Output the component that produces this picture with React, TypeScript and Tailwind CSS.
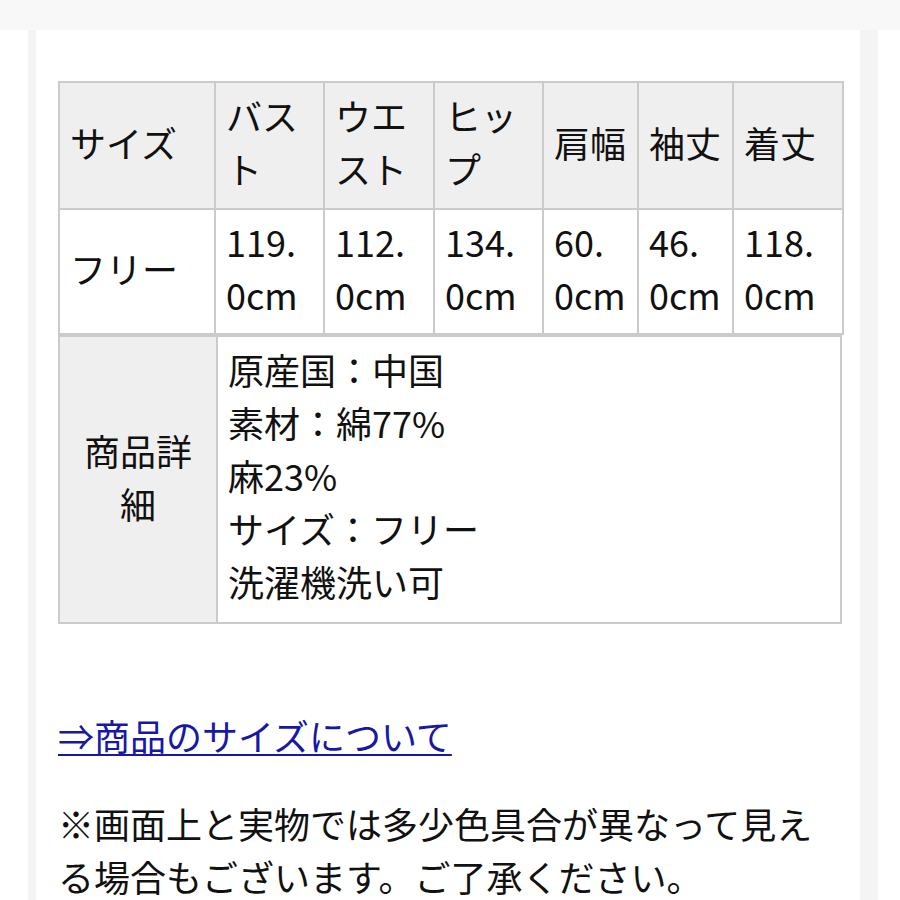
import React from "react";

const headers: React.ReactNode[] = [
  "サイズ",
  <>バス<br />ト</>,
  <>ウエ<br />スト</>,
  <>ヒッ<br />プ</>,
  "肩幅",
  "袖丈",
  "着丈",
];

const values: React.ReactNode[] = [
  "フリー",
  <>119.<br />0cm</>,
  <>112.<br />0cm</>,
  <>134.<br />0cm</>,
  <>60.<br />0cm</>,
  <>46.<br />0cm</>,
  <>118.<br />0cm</>,
];

const colWidths = ["w-[156px]", "w-[109px]", "w-[110px]", "w-[109px]", "w-[95px]", "w-[95px]", "w-[110px]"];

const details = ["原産国：中国", "素材：綿77%", "麻23%", "サイズ：フリー", "洗濯機洗い可"];

const cell = "border-2 border-[#cbcbcb] px-[10px] pt-0 pb-[7px] align-middle text-left";

export default function App() {
  return (
    <div
      className="min-h-[900px] bg-white text-[#111] text-[36px] leading-[53px]"
      style={{ fontFamily: '"Noto Sans CJK JP", "Noto Sans", sans-serif' }}
    >
      <div className="h-[30px] bg-[#f8f8f8]" />
      <div className="flex">
        <div className="w-[28px]" />
        <div className="w-[8px] bg-[#f4f4f4]" />
        <div className="w-[824px] px-[22px] pt-[51px] pb-[20px]">
          <table className="w-[784px] border-collapse table-fixed">
            <colgroup>
              {colWidths.map((w, i) => (
                <col key={i} className={w} />
              ))}
            </colgroup>
            <tbody>
              <tr className="h-[127px] bg-[#efefef]">
                {headers.map((h, i) => (
                  <td key={i} className={cell}>
                    {h}
                  </td>
                ))}
              </tr>
              <tr className="h-[125px] bg-white">
                {values.map((v, i) => (
                  <td key={i} className={cell}>
                    {v}
                  </td>
                ))}
              </tr>
            </tbody>
          </table>

          <table className="w-[784px] border-collapse table-fixed">
            <colgroup>
              <col className="w-[158px]" />
              <col />
            </colgroup>
            <tbody>
              <tr className="h-[287px]">
                <td className="border-2 border-[#cbcbcb] bg-[#efefef] px-[12px] pb-[6px] align-middle text-center">
                  商品詳細
                </td>
                <td className="border-2 border-[#cbcbcb] bg-white px-[10px] pt-[6px] pb-[14px] align-top">
                  {details.map((d) => (
                    <div key={d}>{d}</div>
                  ))}
                </td>
              </tr>
            </tbody>
          </table>

          <div className="mt-[85px]">
            <a href="#" className="text-[#1717a8] underline underline-offset-[3px] decoration-2">
              ⇒商品のサイズについて
            </a>
          </div>

          <p className="mt-[35px]">
            ※画面上と実物では多少色具合が異なって見える場合もございます。ご了承ください。
          </p>
        </div>
        <div className="w-[18px] bg-[#f4f4f4]" />
      </div>
    </div>
  );
}
